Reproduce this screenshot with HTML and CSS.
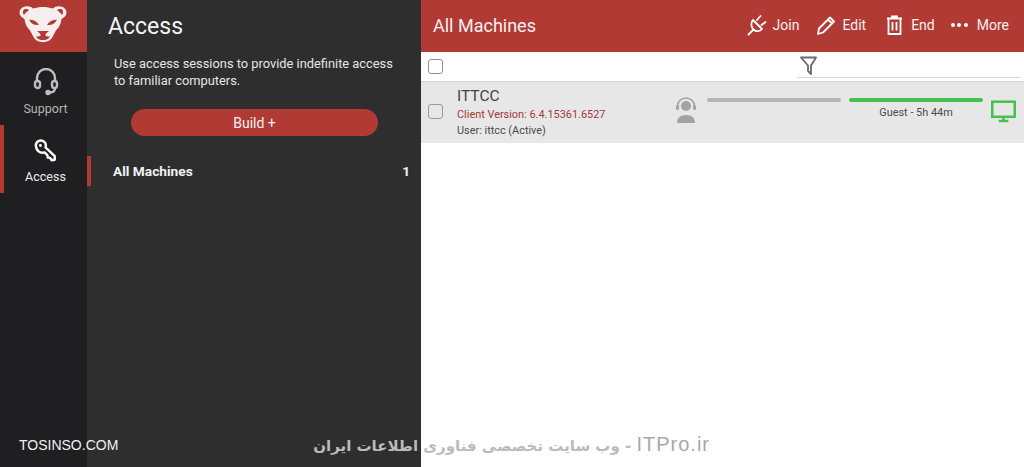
FILE: index.html
```html
<!DOCTYPE html>
<html>
<head>
    <title>Access</title>
    <link rel="stylesheet" href="styles.css">
</head>
<body>
    <div class="app">
        <nav class="rail">
            <div class="logo">
                <svg width="52" height="38" viewBox="0 0 52 44" preserveAspectRatio="none">
                    <path fill="#f6eeee" d="M7 1c3-1.500 7-.5 9 2 6-2.500 14-2.500 20 0 2-2.500 6-3.500 9-2 5 2 5.500 8 3 11-1 1.500-2.500 2.500-3.500 3-.5 5-2 9-4.500 12-2 2.500-3 6-4.500 9-1.500 3.500-5 6-9.500 6s-8-2.500-9.500-6c-1.500-3-2.500-6.500-4.500-9-2.500-3-4-7-4.500-12-1-.5-2.500-1.500-3.500-3C1.500 9 2 3 7 1z"/>
                    <path fill="#b23a34" d="M7 4c1.500-1 4-.5 5 1-2 1.500-3.500 3-5 5.500-1.500-2-1.500-5 0-6.500zM45 4c-1.500-1-4-.5-5 1 2 1.500 3.500 3 5 5.500 1.500-2 1.500-5 0-6.500zM12 16c5 0 8 2 10 6-5 .5-8-1.500-10-6zM40 16c-5 0-8 2-10 6 5 .5 8-1.500 10-6zM20 29h12l-3.500 3.500v2c1.500 1 3 1 4.500.5-1 3-4 4.500-7 4.500s-6-1.500-7-4.500c1.500.5 3 .5 4.500-.5v-2z"/>
                </svg>
            </div>
            <a class="rail-item">
                <svg width="26" height="28" viewBox="0 0 26 28" fill="none" stroke="#bdbdbd" stroke-width="2.400">
                    <path d="M4 13V10a9 9 0 0 1 18 0v3"/>
                    <rect x="2" y="13" width="5" height="7" rx="2.500"/>
                    <rect x="19" y="13" width="5" height="7" rx="2.500"/>
                    <path d="M22 20c0 3-2 4.500-5 4.500"/>
                    <circle cx="15" cy="24.500" r="1.500" fill="#bdbdbd"/>
                </svg>
                <span>Support</span>
            </a>
            <a class="rail-item active">
                <svg width="25" height="24" viewBox="0 0 26 26" fill="none" stroke="#fff" stroke-width="2.600" stroke-linejoin="round">
                    <path d="M2.500 6.500a5.500 5.500 0 0 1 10-2.500c1 1.500 1 3.500.5 5l10 9.500v4l-3.500.5-1.500-2.500-2.500-.5-.5-2.500-3-3c-3.500 1-7-.5-8.500-3.500-.5-1.500-1-3-1-4.500z"/>
                    <circle cx="7.500" cy="7" r="1.200" fill="#fff" stroke-width="1"/>
                </svg>
                <span>Access</span>
            </a>
        </nav>

        <aside class="panel">
            <h1 class="panel-title">Access</h1>
            <p class="panel-text">Use access sessions to provide indefinite access to familiar computers.</p>
            <button class="build">Build +</button>
            <div class="group">
                <span>All Machines</span>
                <span class="group-count">1</span>
            </div>
        </aside>

        <main class="main">
            <header class="topbar">
                <h2 class="topbar-title">All Machines</h2>
                <div class="actions">
                    <a class="action">
                        <svg width="20" height="22" viewBox="0 0 20 22" fill="none" stroke="#fff" stroke-width="1.800" stroke-linecap="round" stroke-linejoin="round">
                            <path d="M6 6l9 9c-2 2.500-6 3-8.500.5S3.500 8.500 6 6zM10 6l3.500-4M14.500 11l4-3M6.500 15.500L1.500 20.500"/>
                        </svg>
                        Join
                    </a>
                    <a class="action">
                        <svg width="19" height="20" viewBox="0 0 19 20" fill="none" stroke="#fff" stroke-width="1.800" stroke-linejoin="round">
                            <path d="M2 13.500L13 2.500l4 4-11 11-5 1.500zM11 4.500l4 4"/>
                        </svg>
                        Edit
                    </a>
                    <a class="action action-end">
                        <svg width="17" height="20" viewBox="0 0 17 20" fill="none" stroke="#fff" stroke-width="1.800">
                            <path d="M1 3.500h15M6 3.500V1.500h5v2M2.500 3.500v15.500h12V3.500M6.500 7v8.500M10.500 7v8.500"/>
                        </svg>
                        End
                    </a>
                    <a class="action action-more">
                        <span class="dots"><i></i><i></i><i></i></span>
                        More
                    </a>
                </div>
            </header>

            <div class="list-head">
                <span class="check"></span>
                <div class="filter">
                    <svg width="17" height="20" viewBox="0 0 17 20" fill="none" stroke="#6b6b6b" stroke-width="1.800" stroke-linejoin="round">
                        <path d="M1 1.500h15l-5 8v8.500l-3-3v-5.500z"/>
                    </svg>
                </div>
            </div>

            <div class="row">
                <span class="check"></span>
                <div class="machine">
                    <div class="machine-name">ITTCC</div>
                    <div class="machine-version">Client Version: 6.4.15361.6527</div>
                    <div class="machine-user">User: ittcc (Active)</div>
                </div>
                <svg class="agent" width="22" height="26" viewBox="0 0 22 26">
                    <circle cx="11" cy="9" r="5" fill="#a3a3a3"/>
                    <path d="M2.500 10V9a8.500 8 0 0 1 17 0v1" fill="none" stroke="#a3a3a3" stroke-width="1.500"/>
                    <rect x="1" y="8" width="3" height="5" rx="1.500" fill="#a3a3a3"/>
                    <rect x="18" y="8" width="3" height="5" rx="1.500" fill="#a3a3a3"/>
                    <path d="M2 26c0-5 3-8 9-8s9 3 9 8z" fill="#a3a3a3"/>
                </svg>
                <div class="bar-col bar-col-first">
                    <div class="bar"></div>
                </div>
                <div class="bar-col">
                    <div class="bar bar-green"></div>
                    <div class="bar-label">Guest - 5h 44m</div>
                </div>
                <svg class="monitor" width="25" height="23" viewBox="0 0 26 23" fill="none" stroke="#45c14f" stroke-width="2.600">
                    <rect x="1.300" y="1.300" width="23.400" height="15.700"/>
                    <path d="M13 18v3M8 21.500h10"/>
                </svg>
            </div>
        </main>
    </div>

    <div class="mark-left">TOSINSO.COM</div>
    <div class="mark-right" dir="rtl"><span dir="ltr">ITPro.ir</span> - وب سایت تخصصی فناوری اطلاعات ایران</div>
</body>
</html>
```

FILE: styles.css
```css
* { box-sizing: border-box; }
html, body { height: 100%; }
body { margin: 0; overflow: hidden; font-family: Roboto, "Liberation Sans", sans-serif; background: #fff; position: relative; }
.app { display: flex; height: 467px; }

.rail { width: 87px; flex: none; background: #1f1f21; }
.logo { height: 52px; background: #b23a34; display: flex; align-items: flex-start; justify-content: center; padding: 6px 2px 0 0; }
.rail-item { height: 68px; margin-bottom: 5px; display: flex; flex-direction: column; align-items: center; padding-top: 16px; color: #b4b4b4; font-size: 12.500px; border-left: 4px solid transparent; }
.rail-item span { margin-top: 5px; }
.rail-item.active { padding-top: 14px; color: #eee; border-left-color: #b23a34; }
.rail-item.active span { margin-top: 6px; }

.panel { width: 334px; flex: none; background: #2e2e2e; color: #f0f0f0; }
.panel-title { margin: 0; height: 52px; padding: 13px 0 0 21px; font-size: 23px; line-height: 28px; font-weight: 400; color: #f4f4f4; }
.panel-text { margin: 0; padding: 3px 20px 0 27px; font-size: 12.850px; line-height: 17px; color: #e6e6e6; }
.build { display: block; width: 247px; height: 27px; margin: 20px 0 0 44px; border: none; border-radius: 14px; background: #b23a34; color: #f2f2f2; font: 14px Roboto, "Liberation Sans", sans-serif; }
.group { display: flex; justify-content: space-between; height: 30px; margin-top: 20px; padding: 0 11px 0 22px; border-left: 4px solid #b23a34; font-size: 13.700px; font-weight: 700; line-height: 30px; color: #f2f2f2; }

.main { flex: 1; min-width: 0; }
.topbar { height: 52px; background: #b23a34; display: flex; align-items: center; justify-content: space-between; padding: 0 15px 2px 12px; color: #f6f0f0; }
.topbar-title { margin: 0; font-size: 18px; font-weight: 400; }
.actions { display: flex; align-items: center; font-size: 14px; }
.action { display: flex; align-items: center; gap: 6px; margin-left: 18px; }
.action-end { margin-left: 20px; gap: 8px; }
.action-more { margin-left: 16px; }
.dots { display: flex; gap: 2.500px; margin-right: 3px; }
.dots i { width: 4px; height: 4px; border-radius: 50%; background: #fff; }

.check { display: block; flex: none; width: 15px; height: 15px; border: 1.500px solid #8f8f8f; border-radius: 3px; background: #fff; }
.list-head { height: 30px; display: flex; padding-left: 7px; align-items: center; justify-content: space-between; border-bottom: 1px solid #d6d6d6; }
.filter { width: 224px; height: 26px; margin-right: 3px; padding: 4px 0 0 3px; border-bottom: 1px solid #d6d6d6; align-self: flex-start; }
.filter svg { display: block; }

.row { height: 61px; background: #e8e7e7; display: flex; align-items: flex-start; padding-left: 7px; }
.row > .check { margin-top: 22px; background: #e8e7e7; border-color: #9a9a9a; }
.machine { width: 216px; margin-left: 14px; padding-top: 5px; }
.machine-name { font-size: 15.500px; line-height: 19px; color: #444; }
.machine-version { font-size: 10.900px; line-height: 17px; color: #a3393a; }
.machine-user { font-size: 10.900px; line-height: 16px; color: #4b4b4b; }
.agent { flex: none; margin: 15px 0 0 2px; }
.bar-col { flex: none; width: 134px; margin-left: 8px; padding-top: 16px; }
.bar-col-first { margin-left: 10px; }
.bar { height: 4px; border-radius: 2px; background: #b5b5b5; }
.bar-green { background: #45c14f; }
.bar-label { margin-top: 3px; text-align: center; font-size: 10.900px; line-height: 16px; color: #4b4b4b; }
.monitor { flex: none; margin: 18px 0 0 8px; }

/* watermark lies over the screenshot */
.mark-left { position: absolute; left: 19px; top: 437px; font: 14px "Liberation Sans", sans-serif; color: #f0f0f0; }
.mark-right { position: absolute; left: 310px; top: 432px; width: 400px; font: 700 15px/24px "DejaVu Sans", "Noto Sans", sans-serif; color: #bbb; white-space: nowrap; }
.mark-right span { font: 400 20px/24px "Liberation Sans", sans-serif; letter-spacing: 1px; color: #a8a8a8; }
```
